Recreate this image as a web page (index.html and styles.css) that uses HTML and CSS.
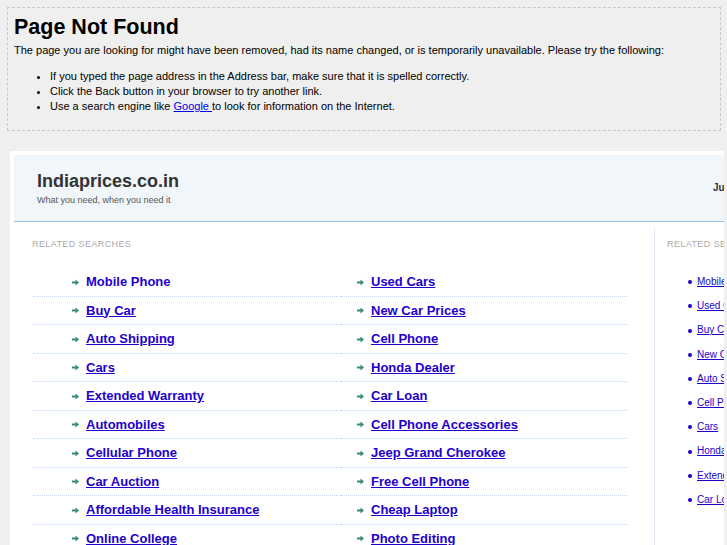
FILE: index.html
```html
<!DOCTYPE html>
<html>
<head lang="en">
    <meta charset="UTF-8">
    <title>Page Not Found</title>
    <link rel="stylesheet" href="styles.css">
</head>
<body>
 <div class="notice">
     <h1>Page Not Found</h1>
     <p>The page you are looking for might have been removed, had its name changed, or is temporarily unavailable. Please try the following:</p>
     <ul>
         <li>If you typed the page address in the Address bar, make sure that it is spelled correctly.</li>
         <li>Click the Back button in your browser to try another link.</li>
         <li>Use a search engine like <a href="#">Google </a> to look for information on the Internet.</li>
     </ul>
 </div>
 <div class="frame">
     <div class="inner">
         <div class="header">
             <div class="brand">
                 <div class="title">Indiaprices.co.in</div>
                 <div class="tagline">What you need, when you need it</div>
             </div>
             <div class="date">June 05, 2011</div>
         </div>
         <div class="body">
             <div class="main">
                 <div class="label">RELATED SEARCHES</div>
                 <div class="links">
                     <ul class="col col-left">
                         <li><a href="#" class="plain">Mobile Phone</a></li>
                         <li><a href="#">Buy Car</a></li>
                         <li><a href="#">Auto Shipping</a></li>
                         <li><a href="#">Cars</a></li>
                         <li><a href="#">Extended Warranty</a></li>
                         <li><a href="#">Automobiles</a></li>
                         <li><a href="#">Cellular Phone</a></li>
                         <li><a href="#">Car Auction</a></li>
                         <li><a href="#">Affordable Health Insurance</a></li>
                         <li><a href="#">Online College</a></li>
                     </ul>
                     <ul class="col col-right">
                         <li><a href="#">Used Cars</a></li>
                         <li><a href="#">New Car Prices</a></li>
                         <li><a href="#">Cell Phone</a></li>
                         <li><a href="#">Honda Dealer</a></li>
                         <li><a href="#">Car Loan</a></li>
                         <li><a href="#">Cell Phone Accessories</a></li>
                         <li><a href="#">Jeep Grand Cherokee</a></li>
                         <li><a href="#">Free Cell Phone</a></li>
                         <li><a href="#">Cheap Laptop</a></li>
                         <li><a href="#">Photo Editing</a></li>
                     </ul>
                 </div>
             </div>
             <div class="side">
                 <div class="label">RELATED SEARCHES</div>
                 <ul class="side-links">
                     <li><a href="#">Mobile Phone</a></li>
                     <li><a href="#">Used Cars</a></li>
                     <li><a href="#">Buy Car</a></li>
                     <li><a href="#">New Car Prices</a></li>
                     <li><a href="#">Auto Shipping</a></li>
                     <li><a href="#">Cell Phone</a></li>
                     <li><a href="#">Cars</a></li>
                     <li><a href="#">Honda Dealer</a></li>
                     <li><a href="#">Extended Warranty</a></li>
                     <li><a href="#">Car Loan</a></li>
                 </ul>
             </div>
         </div>
     </div>
 </div>
</body>
</html>
```

FILE: styles.css
```css
 *{
     margin: 0;
     padding: 0;
 }
 ul{
     list-style: none;
 }
 html,body{
     height: 100%;
     overflow: hidden;
 }
 body{
     background-color: #efefef;
     font-family: "Liberation Sans", Arial, sans-serif;
     color: #000;
 }
 .notice{
     margin: 7px 6px 0 7px;
     border: 1px dashed #c8c8c8;
     padding: 6px 0 16px 6px;
     font-size: 11px;
     line-height: 15px;
 }
 .notice h1{
     font-size: 21.5px;
     line-height: 26px;
     font-weight: bold;
     margin-bottom: 3px;
 }
 .notice ul{
     list-style: disc;
     margin: 11px 0 0 36px;
 }
 .notice a{
     color: #0000ee;
 }
 .frame{
     margin: 20px 3px 0 10px;
     background-color: #fff;
     padding: 4px 0 0 4px;
     height: 390px;
     overflow: hidden;
 }
 .inner{
     width: 800px;
 }
 .header{
     background-color: #f0f6f9;
     border-bottom: 1px solid #9dbde8;
     height: 66px;
     display: flex;
     padding-left: 23px;
 }
 .brand{
     width: 676px;
     padding-top: 15px;
 }
 .title{
     font-size: 18px;
     line-height: 22px;
     font-weight: bold;
     color: #333;
 }
 .tagline{
     font-size: 9px;
     line-height: 12px;
     color: #555;
     margin-top: 2px;
 }
 .date{
     font-size: 10px;
     font-weight: bold;
     color: #333;
     padding-top: 27px;
     white-space: nowrap;
 }
 .body{
     display: flex;
     padding-top: 6px;
 }
 .main{
     width: 622px;
     padding-left: 18px;
     border-right: 1px solid #dde7f3;
     min-height: 320px;
 }
 .label{
     font-size: 9px;
     letter-spacing: 0.4px;
     color: #aaa;
     padding-top: 10px;
     line-height: 12px;
 }
 .links{
     display: flex;
     margin: 18px 0 0 1px;
 }
 .col li{
     border-bottom: 1px dotted #c7d6ea;
     padding: 6px 0 5.5px;
     line-height: 16px;
     display: flex;
     align-items: center;
 }
 .col-left{
     width: 308px;
 }
 .col-left li{
     padding-left: 39px;
 }
 .col-right{
     width: 286px;
 }
 .col-right li{
     padding-left: 16px;
 }
 .col li::before{
     content: "";
     width: 7px;
     height: 7px;
     margin-right: 7px;
     background: url("data:image/svg+xml,%3Csvg xmlns='http://www.w3.org/2000/svg' width='7' height='7'%3E%3Cpath d='M0 2.5h3.5V0.5L7 3.5 3.5 6.5V4.5H0z' fill='%23368a7c'/%3E%3C/svg%3E") no-repeat;
 }
 .col a{
     font-size: 13px;
     font-weight: bold;
     color: #2200cc;
 }
 .col a.plain{
     text-decoration: none;
 }
 .side{
     padding-left: 12px;
 }
 .side-links{
     margin: 20px 0 0 21px;
 }
 .side-links li{
     font-size: 10px;
     line-height: 24.2px;
     display: flex;
     align-items: center;
 }
 .side-links li::before{
     content: "";
     width: 4px;
     height: 4px;
     border-radius: 50%;
     background-color: #2200cc;
     margin-right: 5px;
 }
 .side-links a{
     color: #2200cc;
     white-space: nowrap;
 }
```
